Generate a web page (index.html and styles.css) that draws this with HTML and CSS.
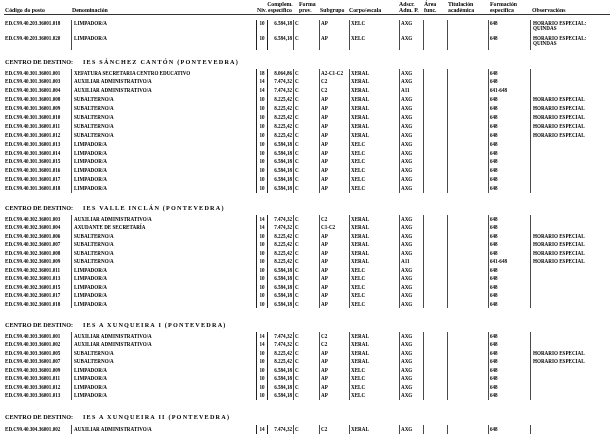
FILE: index.html
```html
<!DOCTYPE html>
<html lang="gl">
<head>
<meta charset="utf-8">
<title>Postos</title>
<link rel="stylesheet" href="styles.css">
</head>
<body>
<div class="page">
  <div class="thead grid">
    <div class="h-code">Código do posto</div>
    <div class="h-den">Denominación</div>
    <div class="h-niv">Niv.</div>
    <div class="h-comp">Complem.<br>específico</div>
    <div class="h-forma">Forma<br>prov.</div>
    <div class="h-sub">Subgrupo</div>
    <div class="h-corpo">Corpo/escala</div>
    <div class="h-adscr">Adscr.<br>Adm. P.</div>
    <div class="h-area">Área<br>func.</div>
    <div class="h-tit">Titulación<br>académica</div>
    <div class="h-form">Formación<br>específica</div>
    <div class="h-obs">Observacións</div>
  </div>

  <div class="rows top">
    <div class="row tall grid"><div>ED.C99.40.203.36001.018</div><div>LIMPADOR/A</div><div>10</div><div>6.584,18</div><div>C</div><div>AP</div><div>XELC</div><div>AXG</div><div></div><div></div><div>648</div><div>HORARIO ESPECIAL:<br>QUINDAS</div></div>
    <div class="row tall grid"><div>ED.C99.40.203.36001.020</div><div>LIMPADOR/A</div><div>10</div><div>6.584,18</div><div>C</div><div>AP</div><div>XELC</div><div>AXG</div><div></div><div></div><div>648</div><div>HORARIO ESPECIAL:<br>QUINDAS</div></div>
  </div>

  <section class="centro">
    <h2 class="centro-title"><span class="lbl">CENTRO DE DESTINO:</span><span class="name">IES SÁNCHEZ CANTÓN (PONTEVEDRA)</span></h2>
    <div class="rows wide">
      <div class="row grid"><div>ED.C99.40.301.36001.001</div><div>XEFATURA SECRETARIA CENTRO EDUCATIVO</div><div>18</div><div>8.064,86</div><div>C</div><div>A2-C1-C2</div><div>XERAL</div><div>AXG</div><div></div><div></div><div>648</div><div></div></div>
      <div class="row grid"><div>ED.C99.40.301.36001.003</div><div>AUXILIAR ADMINISTRATIVO/A</div><div>14</div><div>7.474,32</div><div>C</div><div>C2</div><div>XERAL</div><div>AXG</div><div></div><div></div><div>648</div><div></div></div>
      <div class="row grid"><div>ED.C99.40.301.36001.004</div><div>AUXILIAR ADMINISTRATIVO/A</div><div>14</div><div>7.474,32</div><div>C</div><div>C2</div><div>XERAL</div><div>A11</div><div></div><div></div><div>641-648</div><div></div></div>
      <div class="row grid"><div>ED.C99.40.301.36001.008</div><div>SUBALTERNO/A</div><div>10</div><div>8.225,42</div><div>C</div><div>AP</div><div>XERAL</div><div>AXG</div><div></div><div></div><div>648</div><div>HORARIO ESPECIAL</div></div>
      <div class="row grid"><div>ED.C99.40.301.36001.009</div><div>SUBALTERNO/A</div><div>10</div><div>8.225,42</div><div>C</div><div>AP</div><div>XERAL</div><div>AXG</div><div></div><div></div><div>648</div><div>HORARIO ESPECIAL</div></div>
      <div class="row grid"><div>ED.C99.40.301.36001.010</div><div>SUBALTERNO/A</div><div>10</div><div>8.225,42</div><div>C</div><div>AP</div><div>XERAL</div><div>AXG</div><div></div><div></div><div>648</div><div>HORARIO ESPECIAL</div></div>
      <div class="row grid"><div>ED.C99.40.301.36001.011</div><div>SUBALTERNO/A</div><div>10</div><div>8.225,42</div><div>C</div><div>AP</div><div>XERAL</div><div>AXG</div><div></div><div></div><div>648</div><div>HORARIO ESPECIAL</div></div>
      <div class="row grid"><div>ED.C99.40.301.36001.012</div><div>SUBALTERNO/A</div><div>10</div><div>8.225,42</div><div>C</div><div>AP</div><div>XERAL</div><div>AXG</div><div></div><div></div><div>648</div><div>HORARIO ESPECIAL</div></div>
      <div class="row grid"><div>ED.C99.40.301.36001.013</div><div>LIMPADOR/A</div><div>10</div><div>6.584,18</div><div>C</div><div>AP</div><div>XELC</div><div>AXG</div><div></div><div></div><div>648</div><div></div></div>
      <div class="row grid"><div>ED.C99.40.301.36001.014</div><div>LIMPADOR/A</div><div>10</div><div>6.584,18</div><div>C</div><div>AP</div><div>XELC</div><div>AXG</div><div></div><div></div><div>648</div><div></div></div>
      <div class="row grid"><div>ED.C99.40.301.36001.015</div><div>LIMPADOR/A</div><div>10</div><div>6.584,18</div><div>C</div><div>AP</div><div>XELC</div><div>AXG</div><div></div><div></div><div>648</div><div></div></div>
      <div class="row grid"><div>ED.C99.40.301.36001.016</div><div>LIMPADOR/A</div><div>10</div><div>6.584,18</div><div>C</div><div>AP</div><div>XELC</div><div>AXG</div><div></div><div></div><div>648</div><div></div></div>
      <div class="row grid"><div>ED.C99.40.301.36001.017</div><div>LIMPADOR/A</div><div>10</div><div>6.584,18</div><div>C</div><div>AP</div><div>XELC</div><div>AXG</div><div></div><div></div><div>648</div><div></div></div>
      <div class="row grid"><div>ED.C99.40.301.36001.018</div><div>LIMPADOR/A</div><div>10</div><div>6.584,18</div><div>C</div><div>AP</div><div>XELC</div><div>AXG</div><div></div><div></div><div>648</div><div></div></div>
    </div>
  </section>

  <section class="centro">
    <h2 class="centro-title"><span class="lbl">CENTRO DE DESTINO:</span><span class="name">IES VALLE INCLÁN (PONTEVEDRA)</span></h2>
    <div class="rows">
      <div class="row grid"><div>ED.C99.40.302.36001.003</div><div>AUXILIAR ADMINISTRATIVO/A</div><div>14</div><div>7.474,32</div><div>C</div><div>C2</div><div>XERAL</div><div>AXG</div><div></div><div></div><div>648</div><div></div></div>
      <div class="row grid"><div>ED.C99.40.302.36001.004</div><div>AXUDANTE DE SECRETARÍA</div><div>14</div><div>7.474,32</div><div>C</div><div>C1-C2</div><div>XERAL</div><div>AXG</div><div></div><div></div><div>648</div><div></div></div>
      <div class="row grid"><div>ED.C99.40.302.36001.006</div><div>SUBALTERNO/A</div><div>10</div><div>8.225,42</div><div>C</div><div>AP</div><div>XERAL</div><div>AXG</div><div></div><div></div><div>648</div><div>HORARIO ESPECIAL</div></div>
      <div class="row grid"><div>ED.C99.40.302.36001.007</div><div>SUBALTERNO/A</div><div>10</div><div>8.225,42</div><div>C</div><div>AP</div><div>XERAL</div><div>AXG</div><div></div><div></div><div>648</div><div>HORARIO ESPECIAL</div></div>
      <div class="row grid"><div>ED.C99.40.302.36001.008</div><div>SUBALTERNO/A</div><div>10</div><div>8.225,42</div><div>C</div><div>AP</div><div>XERAL</div><div>AXG</div><div></div><div></div><div>648</div><div>HORARIO ESPECIAL</div></div>
      <div class="row grid"><div>ED.C99.40.302.36001.009</div><div>SUBALTERNO/A</div><div>10</div><div>8.225,42</div><div>C</div><div>AP</div><div>XERAL</div><div>A11</div><div></div><div></div><div>641-648</div><div>HORARIO ESPECIAL</div></div>
      <div class="row grid"><div>ED.C99.40.302.36001.011</div><div>LIMPADOR/A</div><div>10</div><div>6.584,18</div><div>C</div><div>AP</div><div>XELC</div><div>AXG</div><div></div><div></div><div>648</div><div></div></div>
      <div class="row grid"><div>ED.C99.40.302.36001.013</div><div>LIMPADOR/A</div><div>10</div><div>6.584,18</div><div>C</div><div>AP</div><div>XELC</div><div>AXG</div><div></div><div></div><div>648</div><div></div></div>
      <div class="row grid"><div>ED.C99.40.302.36001.015</div><div>LIMPADOR/A</div><div>10</div><div>6.584,18</div><div>C</div><div>AP</div><div>XELC</div><div>AXG</div><div></div><div></div><div>648</div><div></div></div>
      <div class="row grid"><div>ED.C99.40.302.36001.017</div><div>LIMPADOR/A</div><div>10</div><div>6.584,18</div><div>C</div><div>AP</div><div>XELC</div><div>AXG</div><div></div><div></div><div>648</div><div></div></div>
      <div class="row grid"><div>ED.C99.40.302.36001.018</div><div>LIMPADOR/A</div><div>10</div><div>6.584,18</div><div>C</div><div>AP</div><div>XELC</div><div>AXG</div><div></div><div></div><div>648</div><div></div></div>
    </div>
  </section>

  <section class="centro">
    <h2 class="centro-title"><span class="lbl">CENTRO DE DESTINO:</span><span class="name">IES A XUNQUEIRA I (PONTEVEDRA)</span></h2>
    <div class="rows">
      <div class="row grid"><div>ED.C99.40.303.36001.001</div><div>AUXILIAR ADMINISTRATIVO/A</div><div>14</div><div>7.474,32</div><div>C</div><div>C2</div><div>XERAL</div><div>AXG</div><div></div><div></div><div>648</div><div></div></div>
      <div class="row grid"><div>ED.C99.40.303.36001.002</div><div>AUXILIAR ADMINISTRATIVO/A</div><div>14</div><div>7.474,32</div><div>C</div><div>C2</div><div>XERAL</div><div>AXG</div><div></div><div></div><div>648</div><div></div></div>
      <div class="row grid"><div>ED.C99.40.303.36001.005</div><div>SUBALTERNO/A</div><div>10</div><div>8.225,42</div><div>C</div><div>AP</div><div>XERAL</div><div>AXG</div><div></div><div></div><div>648</div><div>HORARIO ESPECIAL</div></div>
      <div class="row grid"><div>ED.C99.40.303.36001.007</div><div>SUBALTERNO/A</div><div>10</div><div>8.225,42</div><div>C</div><div>AP</div><div>XERAL</div><div>AXG</div><div></div><div></div><div>648</div><div>HORARIO ESPECIAL</div></div>
      <div class="row grid"><div>ED.C99.40.303.36001.009</div><div>LIMPADOR/A</div><div>10</div><div>6.584,18</div><div>C</div><div>AP</div><div>XELC</div><div>AXG</div><div></div><div></div><div>648</div><div></div></div>
      <div class="row grid"><div>ED.C99.40.303.36001.011</div><div>LIMPADOR/A</div><div>10</div><div>6.584,18</div><div>C</div><div>AP</div><div>XELC</div><div>AXG</div><div></div><div></div><div>648</div><div></div></div>
      <div class="row grid"><div>ED.C99.40.303.36001.012</div><div>LIMPADOR/A</div><div>10</div><div>6.584,18</div><div>C</div><div>AP</div><div>XELC</div><div>AXG</div><div></div><div></div><div>648</div><div></div></div>
      <div class="row grid"><div>ED.C99.40.303.36001.013</div><div>LIMPADOR/A</div><div>10</div><div>6.584,18</div><div>C</div><div>AP</div><div>XELC</div><div>AXG</div><div></div><div></div><div>648</div><div></div></div>
    </div>
  </section>

  <section class="centro">
    <h2 class="centro-title"><span class="lbl">CENTRO DE DESTINO:</span><span class="name">IES A XUNQUEIRA II (PONTEVEDRA)</span></h2>
    <div class="rows">
      <div class="row grid"><div>ED.C99.40.304.36001.002</div><div>AUXILIAR ADMINISTRATIVO/A</div><div>14</div><div>7.474,32</div><div>C</div><div>C2</div><div>XERAL</div><div>AXG</div><div></div><div></div><div>648</div><div></div></div>
    </div>
  </section>
</div>
</body>
</html>
```

FILE: styles.css
```css
html, body {
  margin: 0;
  padding: 0;
  background: #ffffff;
}

body {
  color: #000000;
  font-family: "Liberation Serif", "Times New Roman", serif;
  font-weight: bold;
  overflow: hidden;
}

.page {
  width: 611px;
  padding-left: 4px;
  will-change: transform;
}

.grid {
  display: grid;
  width: 606px;
  grid-template-columns: 67px 185px 11px 26px 26px 30px 50px 24px 24px 41px 42px 80px;
}

/* ---------- header ---------- */
.thead {
  height: 14px;
  border-bottom: 1px solid #333333;
  font-size: 5.8px;
  line-height: 5.5px;
  align-items: end;
}

.thead > div {
  white-space: nowrap;
  padding-bottom: 1px;
}

.h-code { padding-left: 1px; }
.h-den { padding-left: 1px; }
.h-niv { padding-left: 1px; }
.h-comp { text-align: center; }
.h-forma { padding-left: 6px; }
.h-sub { padding-left: 1px; }
.h-corpo { padding-left: 0; }
.h-adscr { padding-left: 0; }
.h-area { padding-left: 1px; }
.h-tit { padding-left: 1px; }
.h-form { padding-left: 2px; }
.h-obs { padding-left: 2px; }

/* ---------- rows ---------- */
.rows.top {
  margin-top: 5px;
}

.row {
  height: 8.5px;
  font-size: 5.1px;
  line-height: 8.5px;
}

.rows.wide .row {
  height: 8.9px;
  line-height: 8.9px;
}

.row > div {
  border-left: 1px solid #4a4a4a;
  white-space: nowrap;
  overflow: hidden;
  padding-left: 1px;
}

.row > div:first-child {
  border-left: none;
  padding-left: 1px;
}

.row > div:nth-child(2) { padding-left: 2px; }
.row > div:nth-child(3) { text-align: center; padding-left: 0; border-left-color: #222222; }
.row > div:nth-child(4) { text-align: right; padding-right: 1px; border-left-color: #222222; }
.row > div:nth-child(5) { padding-left: 1px; }
.row > div:nth-child(12) { padding-left: 2px; }

.rows .row.tall {
  height: 15px;
  line-height: 5px;
}

.row.tall > div {
  padding-top: 1px;
}

/* ---------- centre headings ---------- */
.centro-title {
  display: flex;
  height: 8px;
  margin: 12.5px 0 3px 0;
  font-size: 6.2px;
  line-height: 8px;
  font-weight: bold;
}

.centro:first-of-type .centro-title {
  margin-top: 7.5px;
}

.centro:nth-of-type(2) .centro-title {
  margin-top: 11px;
}

.centro:nth-of-type(4) .centro-title {
  margin-top: 13.5px;
  margin-bottom: 4px;
}

.centro-title .lbl {
  width: 79px;
  padding-left: 1px;
  box-sizing: border-box;
  white-space: nowrap;
}

.centro-title .name {
  letter-spacing: 1.2px;
  white-space: nowrap;
}
```
